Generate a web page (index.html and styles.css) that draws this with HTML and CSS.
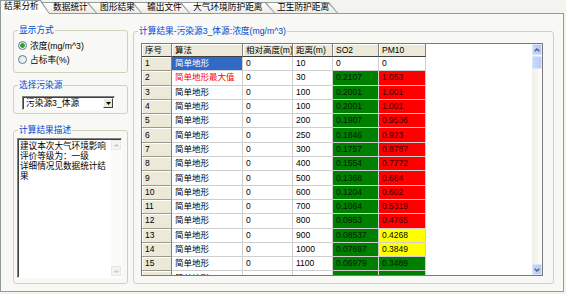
FILE: index.html
```html
<!DOCTYPE html>
<html lang="zh-CN">
<head>
    <meta charset="UTF-8">
    <title>结果分析</title>
    <link rel="stylesheet" href="styles.css">
</head>
<body>
    <div class="window">
        <!-- Tab strip -->
        <div class="tabs">
            <div class="tab tab-active t1">结果分析</div>
            <div class="tab t2">数据统计</div>
            <div class="tab t3">图形结果</div>
            <div class="tab t4">输出文件</div>
            <div class="tab t5">大气环境防护距离</div>
            <div class="tab t6">卫生防护距离</div>
        </div>

        <div class="page">
            <div class="side">
                <fieldset class="group group-mode">
                    <legend>显示方式</legend>
                    <div class="mode-body">
                        <div class="radio checked"><span class="dot"></span>浓度(mg/m^3)</div>
                        <div class="radio"><span class="dot"></span>占标率(%)</div>
                    </div>
                </fieldset>

                <fieldset class="group group-source">
                    <legend>选择污染源</legend>
                    <div class="source-body">
                        <div class="combo">
                            <span class="combo-text">污染源3_体源</span>
                            <span class="combo-btn">
                                <svg width="5" height="3" viewBox="0 0 5 3"><path d="M0 0h5L2.5 3z" fill="#000"/></svg>
                            </span>
                        </div>
                    </div>
                </fieldset>

                <fieldset class="group group-desc">
                    <legend>计算结果描述</legend>
                    <div class="desc-body">
                        <div class="memo">
                            <div class="memo-text">建议本次大气环境影响<br>评价等级为：一级<br>详细情况见数据统计结果</div>
                            <div class="memo-scroll">
                                <span class="memo-btn"><svg width="5" height="3" viewBox="0 0 5 3"><path d="M0.5 2.5L2.5 0.7L4.5 2.5" fill="none" stroke="#c8c8c0" stroke-width="1.2"/></svg></span>
                                <span class="memo-btn"><svg width="5" height="3" viewBox="0 0 5 3"><path d="M0.5 0.5L2.5 2.3L4.5 0.5" fill="none" stroke="#c8c8c0" stroke-width="1.2"/></svg></span>
                            </div>
                        </div>
                    </div>
                </fieldset>
            </div>

            <fieldset class="group group-result">
                <legend>计算结果-污染源3_体源:浓度(mg/m^3)</legend>
                <div class="result-body">
                    <div class="grid">
                        <div class="grid-view">
                            <table>
                                <colgroup>
                                    <col class="c-no"><col class="c-alg"><col class="c-h"><col class="c-d"><col class="c-so2"><col class="c-pm">
                                </colgroup>
                                <tr class="head">
                                    <th>序号</th><th>算法</th><th>相对高度(m)</th><th>距离(m)</th><th>SO2</th><th>PM10</th>
                                </tr>
                                <tr><th>1</th><td class="sel">简单地形</td><td>0</td><td>10</td><td>0</td><td>0</td></tr>
                                <tr><th>2</th><td class="max">简单地形最大值</td><td>0</td><td>30</td><td class="ok">0.2107</td><td class="over">1.053</td></tr>
                                <tr><th>3</th><td>简单地形</td><td>0</td><td>100</td><td class="ok">0.2001</td><td class="over">1.001</td></tr>
                                <tr><th>4</th><td>简单地形</td><td>0</td><td>100</td><td class="ok">0.2001</td><td class="over">1.001</td></tr>
                                <tr><th>5</th><td>简单地形</td><td>0</td><td>200</td><td class="ok">0.1907</td><td class="over">0.9536</td></tr>
                                <tr><th>6</th><td>简单地形</td><td>0</td><td>250</td><td class="ok">0.1846</td><td class="over">0.923</td></tr>
                                <tr><th>7</th><td>简单地形</td><td>0</td><td>300</td><td class="ok">0.1757</td><td class="over">0.8787</td></tr>
                                <tr><th>8</th><td>简单地形</td><td>0</td><td>400</td><td class="ok">0.1554</td><td class="over">0.7772</td></tr>
                                <tr><th>9</th><td>简单地形</td><td>0</td><td>500</td><td class="ok">0.1368</td><td class="over">0.684</td></tr>
                                <tr><th>10</th><td>简单地形</td><td>0</td><td>600</td><td class="ok">0.1204</td><td class="over">0.602</td></tr>
                                <tr><th>11</th><td>简单地形</td><td>0</td><td>700</td><td class="ok">0.1064</td><td class="over">0.5319</td></tr>
                                <tr><th>12</th><td>简单地形</td><td>0</td><td>800</td><td class="ok">0.0953</td><td class="over">0.4765</td></tr>
                                <tr><th>13</th><td>简单地形</td><td>0</td><td>900</td><td class="ok">0.08537</td><td class="warn">0.4268</td></tr>
                                <tr><th>14</th><td>简单地形</td><td>0</td><td>1000</td><td class="ok">0.07697</td><td class="warn">0.3849</td></tr>
                                <tr><th>15</th><td>简单地形</td><td>0</td><td>1100</td><td class="ok">0.06979</td><td class="ok">0.3489</td></tr>
                                <tr><th>16</th><td>简单地形</td><td>0</td><td>1200</td><td class="ok">0.06362</td><td class="ok">0.3181</td></tr>
                            </table>
                        </div>
                        <div class="vscroll">
                            <span class="sb-btn"><svg width="6" height="4" viewBox="0 0 6 4"><path d="M0.7 3.3L3 1L5.3 3.3" fill="none" stroke="#4d6185" stroke-width="1.4"/></svg></span>
                            <span class="sb-thumb"></span>
                            <span class="sb-track"></span>
                            <span class="sb-btn"><svg width="6" height="4" viewBox="0 0 6 4"><path d="M0.7 0.7L3 3L5.3 0.7" fill="none" stroke="#4d6185" stroke-width="1.4"/></svg></span>
                        </div>
                    </div>
                </div>
            </fieldset>
        </div>
    </div>
</body>
</html>
```

FILE: styles.css
```css
/* Result analysis window */

body {
    margin: 0;
    background: #f3f3ef;
    font-family: "Liberation Sans", "Noto Sans CJK SC", sans-serif;
    font-size: 8.7px;
    color: #000;
}

.window {
    width: 564px;
}

/* Tabs */

.tabs {
    display: flex;
    align-items: flex-end;
    height: 13px;
    position: relative;
    z-index: 1;
}

.tab {
    box-sizing: border-box;
    position: relative;
    height: 11px;
    line-height: 11px;
    padding-left: 12px;
    margin-left: -9px;
    background: #919b9c;
    white-space: nowrap;
    clip-path: polygon(0 0, calc(100% - 9px) 0, 100% 100%, 0 100%);
}

.tab::before {
    content: "";
    position: absolute;
    left: 1px;
    top: 1px;
    right: 1px;
    bottom: 0;
    background: linear-gradient(#fefefe, #ecebe5);
    clip-path: polygon(0 0, calc(100% - 9px) 0, 100% 100%, 0 100%);
    z-index: -1;
}

.tab-active {
    height: 14px;
    line-height: 13px;
    margin-bottom: -1px;
    margin-left: 0;
    padding-left: 4px;
}

.tab-active::before {
    background: #fbfbf9;
}

.t1 { width: 50px; z-index: 7; }
.t2 { width: 56px; z-index: 5; }
.t3 { width: 54px; z-index: 4; }
.t4 { width: 57px; z-index: 3; padding-left: 14px; }
.t5 { width: 94px; z-index: 2; }
.t6 { width: 72px; z-index: 1; padding-left: 11px; }

/* Page */

.page {
    box-sizing: border-box;
    width: 564px;
    height: 279px;
    border: 1px solid #919b9c;
    background: #f8f8f4;
    display: flex;
    gap: 5px;
    padding: 11px 8px 0 12px;
}

.side {
    display: flex;
    flex-direction: column;
    width: 115px;
}

.group {
    box-sizing: border-box;
    margin: 0;
    padding: 0;
    min-width: 0;
    border: 1px solid #d0d0bf;
    border-radius: 3px;
}

.group legend {
    margin-left: 4px;
    padding: 0 1px;
    line-height: 11px;
    color: #0046d5;
}

.group-mode {
    height: 48px;
}

.group-source {
    height: 34px;
    margin-top: 7px;
}

.group-desc {
    height: 159px;
    margin-top: 11px;
}

.group-result {
    width: 421px;
    height: 258px;
    margin-top: 1px;
}

/* Radios */

.mode-body {
    padding: 2px 0 0 4px;
}

.radio {
    display: flex;
    align-items: center;
    gap: 3px;
    height: 14px;
}

.dot {
    box-sizing: border-box;
    width: 9px;
    height: 9px;
    border-radius: 50%;
    border: 1px solid #5a7ea6;
    background: linear-gradient(135deg, #dedcd4, #fff);
}

.checked .dot {
    background: radial-gradient(circle, #2aa12a 0, #2aa12a 2px, transparent 2.6px),
                linear-gradient(135deg, #dedcd4, #fff);
}

/* Combo */

.source-body {
    padding: 5px 0 0 8px;
}

.combo {
    box-sizing: border-box;
    display: flex;
    width: 93px;
    height: 14px;
    padding: 1px;
    border: 1px solid;
    border-color: #808080 #fff #fff #808080;
    box-shadow: inset 1px 1px #404040;
    background: #fff;
}

.combo-text {
    flex: 1;
    padding-left: 2px;
    line-height: 10px;
}

.combo-btn {
    box-sizing: border-box;
    width: 10px;
    display: flex;
    align-items: center;
    justify-content: center;
    background: #ece9d8;
    border: 1px solid;
    border-color: #fff #404040 #404040 #fff;
}

/* Memo */

.desc-body {
    padding: 2px 5px 0 3px;
}

.memo {
    box-sizing: border-box;
    display: flex;
    height: 140px;
    border: 1px solid;
    border-color: #808080 #fff #fff #808080;
    box-shadow: inset 1px 1px #404040;
    background: #fff;
}

.memo-text {
    flex: 1;
    padding: 3px 0 0 2px;
    font-size: 8.6px;
    line-height: 9.9px;
}

.memo-scroll {
    width: 10px;
    margin: 1px 0 1px 0;
    display: flex;
    flex-direction: column;
    justify-content: space-between;
    background: #fbfbf9;
}

.memo-btn {
    height: 10px;
    display: flex;
    align-items: center;
    justify-content: center;
    background: #f4f4f0;
    border: 1px solid #e8e8e2;
    box-sizing: border-box;
}

/* Result grid */

.result-body {
    padding: 6px 0 0 7px;
}

.grid {
    box-sizing: border-box;
    display: flex;
    width: 402px;
    height: 233px;
    border: 1px solid #7a7a7a;
    background: #fff;
}

.grid-view {
    flex: 1;
    overflow: hidden;
}

table {
    table-layout: fixed;
    width: 284px;
    border-collapse: separate;
    border-spacing: 0;
    font-size: 8.5px;
}

.c-no { width: 30px; }
.c-alg { width: 71px; }
.c-h { width: 50px; }
.c-d { width: 40px; }
.c-so2 { width: 46px; }
.c-pm { width: 47px; }

tr {
    height: 14.3px;
}

tr.head {
    height: 13px;
}

th, td {
    box-sizing: border-box;
    padding: 0 0 0 3px;
    line-height: 11px;
    text-align: left;
    font-weight: normal;
    white-space: nowrap;
    overflow: hidden;
}

th {
    background: #ece9d8;
    border-right: 1px solid #808080;
    border-bottom: 1px solid #9c9a90;
    box-shadow: inset 1px 1px #fff;
}

.head th {
    border-bottom: 1px solid #404040;
}

td {
    border-right: 1px solid #cfcfcf;
    border-bottom: 1px solid #cfcfcf;
}

td.sel {
    background: #316ac5;
    color: #fff;
}

td.max {
    color: #ff0000;
}

td.ok {
    background: #008000;
    color: #001a00;
}

td.over {
    background: #ff0000;
    color: #3a0000;
}

td.warn {
    background: #ffff00;
}

/* Grid scrollbar */

.vscroll {
    width: 10px;
    display: flex;
    flex-direction: column;
    background: linear-gradient(90deg, #f1efe8, #fdfdfa);
}

.sb-btn {
    box-sizing: border-box;
    height: 11px;
    display: flex;
    align-items: center;
    justify-content: center;
    background: linear-gradient(90deg, #c5d5fb, #b8cbf6);
    border: 1px solid #dbe5fc;
    border-radius: 1px;
}

.sb-thumb {
    box-sizing: border-box;
    height: 13px;
    margin-top: 1px;
    background: linear-gradient(90deg, #c9d8fc, #b9ccf7);
    border: 1px solid #dbe5fc;
    border-radius: 1px;
}

.sb-track {
    flex: 1;
}
```
